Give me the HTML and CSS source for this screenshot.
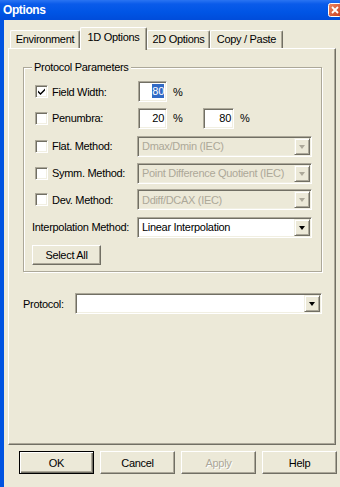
FILE: index.html
```html
<!DOCTYPE html>
<html>
<head>
<meta charset="utf-8">
<title>Options</title>
<link rel="stylesheet" href="styles.css">
</head>
<body>
<div class="window">
  <div class="titlebar">
    <span class="title">Options</span>
    <span class="close">
      <svg width="14" height="14" viewBox="0 0 14 14">
        <defs>
          <linearGradient id="cg" x1="0" y1="0" x2="1" y2="1">
            <stop offset="0" stop-color="#F08A64"/>
            <stop offset="1" stop-color="#C83A1C"/>
          </linearGradient>
        </defs>
        <rect x="0.5" y="0.5" width="13" height="13" rx="2" fill="url(#cg)" stroke="#fff"/>
        <path d="M4 4 L10 10 M10 4 L4 10" stroke="#fff" stroke-width="1.8"/>
      </svg>
    </span>
  </div>
  <div class="frame">
    <div class="tabs">
      <div class="tab tab-env">Environment</div>
      <div class="tab tab-1d selected">1D Options</div>
      <div class="tab tab-2d">2D Options</div>
      <div class="tab tab-cp">Copy / Paste</div>
    </div>
    <div class="panel">
      <div class="group">
        <span class="legend">Protocol Parameters</span>
        <div class="grid">
          <div class="chk-label r1"><span class="check"><svg width="9" height="9" viewBox="0 0 9 9"><path d="M1 3.5 L3.5 6 L8 1.5 L8 3.5 L3.5 8 L1 5.5 Z" fill="#000"/></svg></span><span class="chk-text">Field Width:</span></div>
          <div class="inputs r1">
            <span class="textbox tb1"><span class="sel">80</span></span>
            <span class="pct">%</span>
          </div>

          <div class="chk-label r2"><span class="check"></span><span class="chk-text">Penumbra:</span></div>
          <div class="inputs r2">
            <span class="textbox tb1">20</span>
            <span class="pct">%</span>
            <span class="textbox tb2">80</span>
            <span class="pct">%</span>
          </div>

          <div class="chk-label r3"><span class="check"></span><span class="chk-text">Flat. Method:</span></div>
          <div class="combo disabled r3"><span class="combo-text">Dmax/Dmin (IEC)</span><span class="combo-btn"><span class="arrow"></span></span></div>

          <div class="chk-label r4"><span class="check"></span><span class="chk-text">Symm. Method:</span></div>
          <div class="combo disabled r4"><span class="combo-text">Point Difference Quotient (IEC)</span><span class="combo-btn"><span class="arrow"></span></span></div>

          <div class="chk-label r5"><span class="check"></span><span class="chk-text">Dev. Method:</span></div>
          <div class="combo disabled r5"><span class="combo-text">Ddiff/DCAX (IEC)</span><span class="combo-btn"><span class="arrow"></span></span></div>

          <div class="plain-label r6">Interpolation Method:</div>
          <div class="combo r6"><span class="combo-text">Linear Interpolation</span><span class="combo-btn"><span class="arrow"></span></span></div>
        </div>
        <button class="btn select-all">Select All</button>
      </div>
      <div class="protocol-row">
        <span class="protocol-label">Protocol:</span>
        <div class="combo protocol-combo"><span class="combo-text"></span><span class="combo-btn"><span class="arrow"></span></span></div>
      </div>
    </div>
    <div class="buttons">
      <button class="btn dlg default">OK</button>
      <button class="btn dlg">Cancel</button>
      <button class="btn dlg disabled">Apply</button>
      <button class="btn dlg">Help</button>
    </div>
  </div>
</div>
</body>
</html>
```

FILE: styles.css
```css
* { box-sizing: border-box; }
html, body { margin: 0; padding: 0; }
body {
  width: 340px;
  height: 487px;
  overflow: hidden;
  background: #ECE9D8;
  font-family: "Liberation Sans", Arial, sans-serif;
  font-size: 11px;
  letter-spacing: -0.3px;
  color: #000;
}
.window { width: 345px; }

.titlebar {
  height: 20px;
  display: flex;
  align-items: center;
  justify-content: space-between;
  padding: 0 3px 0 3px;
  background: linear-gradient(#2A74F2 0%, #0A5BEA 20%, #0055E5 60%, #004CDA 100%);
}
.title {
  color: #fff;
  font-weight: bold;
  font-size: 12px;
  letter-spacing: -0.4px;
}
.close { width: 14px; height: 14px; display: block; }
.close svg { display: block; }

.frame {
  border-left: 4px solid #0053E1;
  height: 467px;
}

.tabs {
  display: flex;
  align-items: flex-end;
  height: 28px;
  padding-left: 6px;
}
.tab {
  height: 18px;
  line-height: 16px;
  text-align: center;
  border-top: 1px solid #fff;
  border-left: 1px solid #fff;
  border-right: 1px solid #716F64;
  box-shadow: inset -1px 0 0 #ACA899;
  border-radius: 2px 2px 0 0;
  background: #ECE9D8;
}
.tab-env { width: 70px; }
.tab-1d { width: 67px; }
.tab-2d { width: 63px; }
.tab-cp { width: 73px; }
.tab.selected {
  height: 23px;
  padding-top: 1px;
  margin-bottom: -2px;
  position: relative;
  z-index: 1;
}

.panel {
  margin-left: 4px;
  width: 328px;
  height: 397px;
  border-top: 1px solid #fff;
  border-left: 1px solid #fff;
  border-right: 1px solid #716F64;
  border-bottom: 1px solid #716F64;
  box-shadow: inset -1px -1px 0 #ACA899;
  padding-top: 18px;
  padding-left: 14px;
}

.group {
  position: relative;
  width: 299px;
  height: 205px;
  border: 1px solid #ACA899;
  box-shadow: inset 1px 1px 0 #fff, 1px 1px 0 #fff;
  padding: 13px 0 0 8px;
}
.legend {
  position: absolute;
  top: -7px;
  left: 8px;
  padding: 0 2px;
  line-height: 13px;
  background: #ECE9D8;
}

.grid {
  display: grid;
  grid-template-columns: 105px 175px;
  grid-template-rows: repeat(6, 21px);
  row-gap: 6px;
  align-items: center;
}
.r2 { margin-top: -1px; }
.r3 { margin-top: 1px; }
.r4 { margin-top: 1px; }
.r6 { margin-top: 1px; }

.chk-label {
  display: flex;
  align-items: center;
  padding-left: 3px;
}
.check {
  width: 13px;
  height: 13px;
  flex: none;
  display: flex;
  align-items: center;
  justify-content: center;
  background: #fff;
  border: 1px solid;
  border-color: #ACA899 #fff #fff #ACA899;
  box-shadow: inset 1px 1px 0 #716F64, inset -1px -1px 0 #F1EFE2;
}
.check svg { display: block; }
.chk-text { margin-left: 4px; white-space: nowrap; }
.plain-label { white-space: nowrap; }

.inputs {
  display: flex;
  align-items: center;
  height: 21px;
}
.textbox {
  height: 21px;
  flex: none;
  background: #fff;
  border: 1px solid;
  border-color: #ACA899 #fff #fff #ACA899;
  box-shadow: inset 1px 1px 0 #716F64, inset -1px -1px 0 #F1EFE2;
  text-align: right;
  padding-right: 2px;
  line-height: 19px;
}
.tb1 { width: 29px; margin-left: 1px; }
.tb2 { width: 31px; }
.sel {
  background: #316AC5;
  color: #fff;
  padding: 1px 0;
}
.pct { width: 36px; flex: none; padding-left: 6px; }

.combo {
  width: 175px;
  height: 21px;
  display: flex;
  align-items: center;
  background: #fff;
  border: 1px solid;
  border-color: #ACA899 #fff #fff #ACA899;
  box-shadow: inset 1px 1px 0 #716F64, inset -1px -1px 0 #F1EFE2;
  padding: 1px;
}
.combo-text {
  flex: 1;
  min-width: 0;
  padding-left: 3px;
  white-space: nowrap;
  overflow: hidden;
}
.combo-btn {
  width: 16px;
  height: 17px;
  flex: none;
  display: flex;
  align-items: center;
  justify-content: center;
  background: #ECE9D8;
  border: 1px solid;
  border-color: #F1EFE2 #716F64 #716F64 #F1EFE2;
  box-shadow: inset 1px 1px 0 #fff, inset -1px -1px 0 #ACA899;
}
.arrow {
  width: 0;
  height: 0;
  border-left: 3.5px solid transparent;
  border-right: 3.5px solid transparent;
  border-top: 4px solid #000;
  margin-top: 1px;
}
.combo.disabled { background: #ECE9D8; }
.combo.disabled .combo-text { color: #ACA899; }
.combo.disabled .arrow { border-top-color: #ACA899; }

.btn {
  font-family: inherit;
  font-size: 11px;
  letter-spacing: -0.3px;
  color: #000;
  background: #ECE9D8;
  border: 1px solid;
  border-color: #fff #716F64 #716F64 #fff;
  box-shadow: inset -1px -1px 0 #ACA899;
  padding: 0;
  border-radius: 0;
}
.select-all {
  display: block;
  width: 69px;
  height: 20px;
  margin-top: 8px;
}

.protocol-row {
  display: flex;
  align-items: center;
  margin-top: 21px;
}
.protocol-label { width: 52px; flex: none; }
.protocol-combo { width: 247px; }

.buttons {
  display: flex;
  gap: 6px;
  margin-top: 6px;
  padding-left: 15px;
}
.dlg { width: 75px; height: 23px; }
.dlg.default {
  border: 1px solid #000;
  box-shadow: inset 1px 1px 0 #fff, inset -1px -1px 0 #716F64, inset -2px -2px 0 #ACA899;
}
.dlg.disabled {
  color: #ACA899;
  text-shadow: 1px 1px 0 #fff;
}
```
